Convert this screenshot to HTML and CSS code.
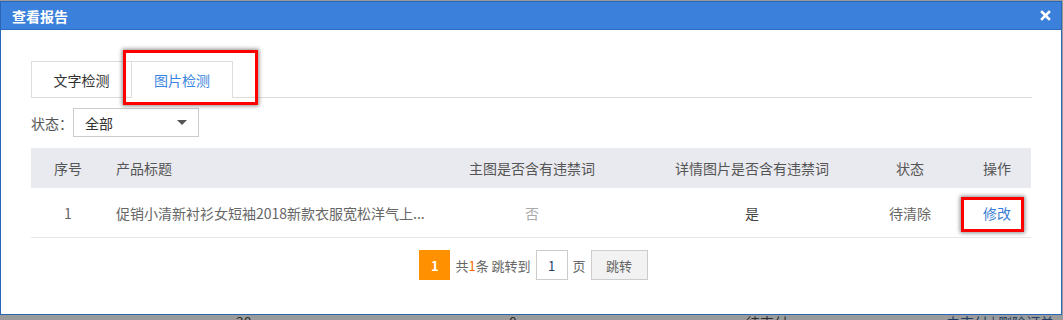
FILE: index.html
```html
<!DOCTYPE html>
<html lang="zh-CN">
<head>
    <meta charset="UTF-8">
    <title>查看报告</title>
    <link rel="stylesheet" href="styles.css">
</head>
<body>
    <div class="page">
        <div class="dialog">
            <div class="dialog-header">
                <span class="dialog-title">查看报告</span>
                <span class="dialog-close">
                    <svg width="11" height="11" viewBox="0 0 11 11"><path d="M2 2L9 9M9 2L2 9" stroke="#fff" stroke-width="2.6" stroke-linecap="square"/></svg>
                </span>
            </div>

            <div class="dialog-body">
                <div class="tabs">
                    <div class="tab">文字检测</div>
                    <div class="tab active">图片检测</div>
                </div>

                <div class="filtro">
                    <span class="filtro-label">状态：</span>
                    <div class="select">
                        <span>全部</span>
                        <span class="caret"></span>
                    </div>
                </div>

                <table class="tabla">
                    <colgroup>
                        <col style="width:74px">
                        <col style="width:312px">
                        <col style="width:230px">
                        <col style="width:210px">
                        <col style="width:106px">
                        <col style="width:68px">
                    </colgroup>
                    <thead>
                        <tr>
                            <th>序号</th>
                            <th class="izq">产品标题</th>
                            <th>主图是否含有违禁词</th>
                            <th>详情图片是否含有违禁词</th>
                            <th>状态</th>
                            <th>操作</th>
                        </tr>
                    </thead>
                    <tbody>
                        <tr>
                            <td>1</td>
                            <td class="izq titulo">促销小清新衬衫女短袖2018新款衣服宽松洋气上...</td>
                            <td class="no">否</td>
                            <td class="si">是</td>
                            <td>待清除</td>
                            <td><a class="link">修改</a></td>
                        </tr>
                    </tbody>
                </table>

                <div class="paginacion">
                    <span class="pag-actual">1</span>
                    <span class="pag-txt">共<em>1</em>条 跳转到</span>
                    <span class="pag-input">1</span>
                    <span class="pag-txt">页</span>
                    <span class="pag-btn">跳转</span>
                </div>
            </div>
        </div>

        <!-- fila de la tabla que queda detrás del diálogo -->
        <div class="detras">
            <span class="d1">20</span>
            <span class="d2">0</span>
            <span class="d3">待支付</span>
            <span class="d4">去支付 | 删除订单</span>
        </div>

        <div class="marca marca-tab"></div>
        <div class="marca marca-link"></div>
    </div>
</body>
</html>
```

FILE: styles.css
```css
body {
    margin: 0;
    background-color: #9b9b9b;
    font-family: "Microsoft YaHei", "Noto Sans CJK SC", "Liberation Sans", sans-serif;
    overflow: hidden;
}
.page {
    position: relative;
    width: 1063px;
    height: 320px;
    overflow: hidden;
}
.dialog {
    margin-top: 1px;
    width: 1062px;
    height: 314px;
    box-sizing: border-box;
    border: 1px solid #2a66b8;
    background-color: #fff;
}
.dialog-header {
    height: 28px;
    box-sizing: border-box;
    background-color: #3b80da;
    border-bottom: 1px solid #2d6bc0;
    display: flex;
    align-items: center;
    justify-content: space-between;
    padding: 0 10px 0 11px;
}
.dialog-title {
    color: #fff;
    font-size: 14px;
    font-weight: bold;
}
.dialog-close {
    display: flex;
}
.dialog-body {
    padding: 31px 29px 0 30px;
}
.tabs {
    display: flex;
    height: 37px;
    box-sizing: border-box;
    border-bottom: 1px solid #ddd;
}
.tab {
    width: 101px;
    height: 37px;
    box-sizing: border-box;
    border: 1px solid #ddd;
    border-bottom: none;
    display: flex;
    align-items: center;
    justify-content: center;
    font-size: 14px;
    color: #333;
}
.tab + .tab {
    border-left: none;
}
.tab.active {
    color: #3a85e0;
    background-color: #fff;
    position: relative;
    z-index: 1;
}
.filtro {
    display: flex;
    align-items: center;
    margin-top: 10px;
}
.filtro-label {
    font-size: 14px;
    color: #555;
    width: 42px;
}
.select {
    width: 126px;
    height: 29px;
    box-sizing: border-box;
    border: 1px solid #ccc;
    display: flex;
    align-items: center;
    justify-content: space-between;
    padding: 0 11px;
    font-size: 14px;
    color: #333;
}
.caret {
    width: 0;
    height: 0;
    border-left: 5px solid transparent;
    border-right: 5px solid transparent;
    border-top: 5px solid #555;
}
.tabla {
    width: 1000px;
    table-layout: fixed;
    border-collapse: collapse;
    margin-top: 11px;
    font-size: 14px;
}
.tabla th {
    height: 40px;
    padding: 0;
    background-color: #e9eaef;
    font-weight: normal;
    color: #555;
    text-align: center;
}
.tabla td {
    height: 49px;
    padding: 0;
    color: #666;
    text-align: center;
    border-bottom: 1px solid #e6e6e6;
}
.tabla .izq {
    text-align: left;
    padding-left: 11px;
}
.tabla .titulo {
    white-space: nowrap;
}
.tabla .no {
    color: #aaa;
}
.tabla .si {
    color: #444;
}
.link {
    color: #3a7fd5;
    text-decoration: none;
}
.paginacion {
    display: flex;
    align-items: center;
    justify-content: center;
    gap: 5px;
    margin-top: 12px;
    padding-left: 4px;
    height: 30px;
    font-size: 13px;
    color: #666;
}
.pag-actual {
    width: 31px;
    height: 30px;
    background-color: #ff9000;
    color: #fff;
    font-weight: bold;
    display: flex;
    align-items: center;
    justify-content: center;
}
.pag-txt em {
    font-style: normal;
    color: #ff6a00;
}
.pag-input {
    width: 32px;
    height: 30px;
    box-sizing: border-box;
    border: 1px solid #ccc;
    color: #1f3f6a;
    display: flex;
    align-items: center;
    justify-content: center;
}
.pag-btn {
    width: 57px;
    height: 30px;
    box-sizing: border-box;
    border: 1px solid #ccc;
    background-color: #f2f2f2;
    color: #666;
    display: flex;
    align-items: center;
    justify-content: center;
}
.detras {
    position: relative;
    height: 20px;
    font-size: 14px;
    color: #2e2e2e;
    margin-top: -3px;
}
.detras span {
    position: absolute;
    top: 0;
}
.detras .d1 { left: 236px; }
.detras .d2 { left: 509px; }
.detras .d3 { left: 746px; }
.detras .d4 { left: 946px; color: #243e66; }
.marca {
    position: absolute;
    box-sizing: border-box;
    border: 3px solid #f00;
    box-shadow: 0 0 4px 1px rgba(0, 0, 0, 0.45);
}
.marca-tab {
    left: 123px;
    top: 50px;
    width: 135px;
    height: 55px;
}
.marca-link {
    left: 961px;
    top: 197px;
    width: 63px;
    height: 35px;
}
```
